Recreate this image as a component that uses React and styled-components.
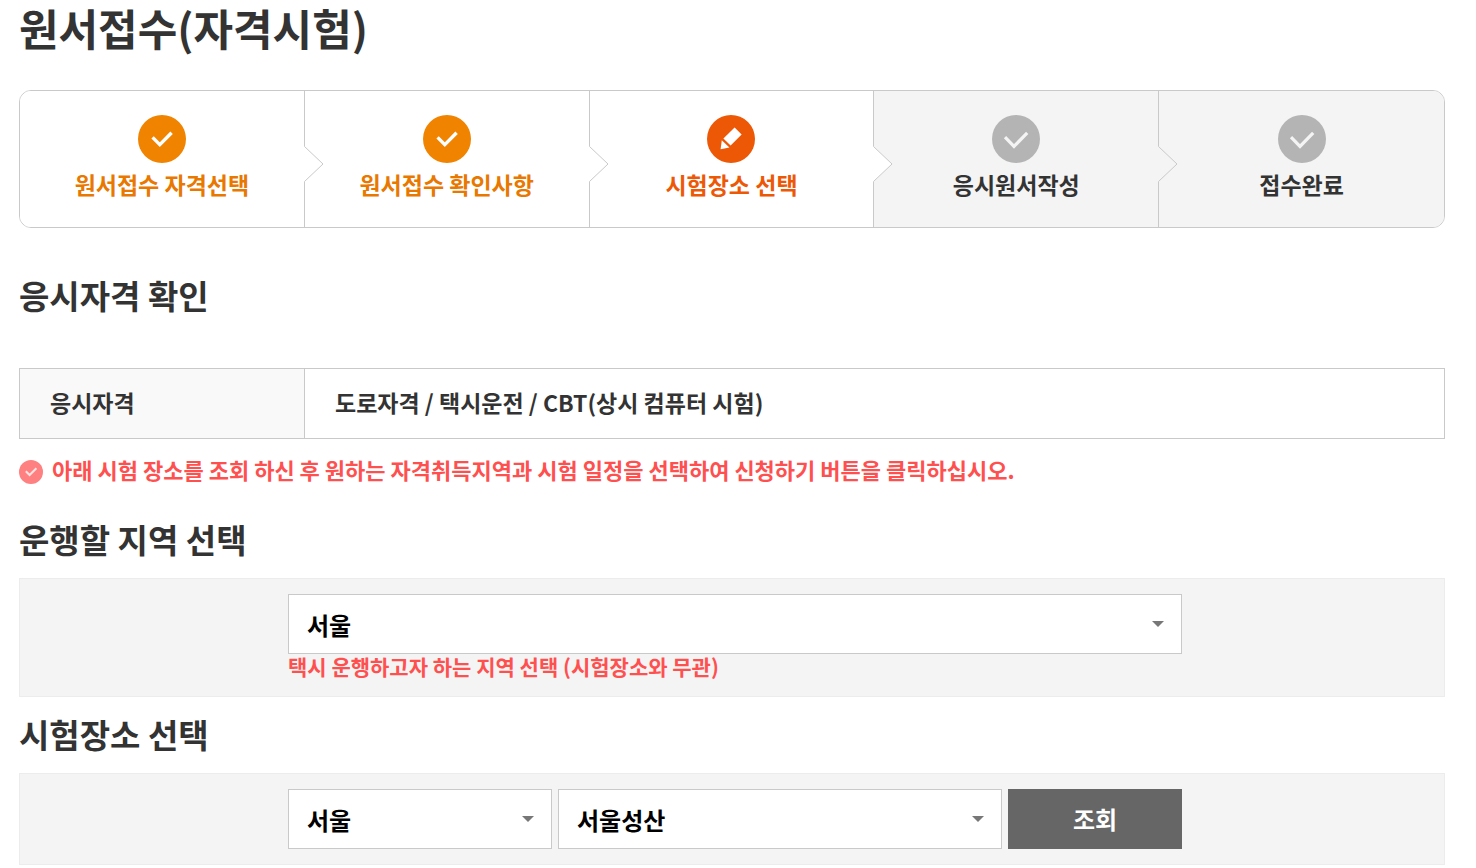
import React, { useState } from 'react';
import styled, { createGlobalStyle } from 'styled-components';

const steps = [
  { label: '원서접수 자격선택', state: 'done' },
  { label: '원서접수 확인사항', state: 'done' },
  { label: '시험장소 선택', state: 'current' },
  { label: '응시원서작성', state: 'todo' },
  { label: '접수완료', state: 'todo' },
];

const stepColors = {
  done: { circle: '#f08300', text: '#e87800', back: '#fff', icon: '#fff' },
  current: { circle: '#ed5807', text: '#ed5807', back: '#fff', icon: '#fff' },
  todo: { circle: '#b4b4b4', text: '#333', back: '#f4f4f4', icon: '#f4f4f4' },
};

const StepIcon = ({ state }) => {
  const { circle, icon } = stepColors[state];
  return (
    <svg width="48" height="48" viewBox="0 0 48 48" aria-hidden="true">
      <circle cx="24" cy="24" r="24" fill={circle} />
      {state === 'done' && (
        <path d="M14.6 22.4L21.8 29.6L33.6 17.8" fill="none" stroke={icon} strokeWidth="3.4" />
      )}
      {state === 'todo' && (
        <path d="M13 22.2L22 31.4L35.2 17.8" fill="none" stroke={icon} strokeWidth="3.2" />
      )}
      {state === 'current' && (
        <g fill={icon}>
          <path d="M27.6 12.6L34.6 19.4L23.6 30.6L16.4 23.6Z" />
          <path d="M14.8 25.2L22.4 32.6L13.6 34.2Z" />
        </g>
      )}
    </svg>
  );
};

const Select = ({ label, value, options, onChange }) => (
  <SelectWrap>
    <SelectBox aria-label={label} value={value} onChange={(e) => onChange(e.target.value)}>
      {options.map((option) => (
        <option key={option}>{option}</option>
      ))}
    </SelectBox>
    <SelectArrow width="12" height="6" viewBox="0 0 12 6" aria-hidden="true">
      <path d="M0 0H12L6 6Z" fill="#777" />
    </SelectArrow>
  </SelectWrap>
);

const App = () => {
  const [region, setRegion] = useState('서울');
  const [city, setCity] = useState('서울');
  const [place, setPlace] = useState('서울성산');

  return (
    <Page>
      <GlobalStyle />
      <Title>원서접수(자격시험)</Title>

      <StepList>
        {steps.map(({ label, state }, i) => (
          <Step key={label} $state={state} aria-current={state === 'current' ? 'step' : undefined}>
            <StepIcon state={state} />
            <StepLabel>{label}</StepLabel>
            {i < steps.length - 1 && (
              <StepNotch width="20" height="36" viewBox="0 0 20 36" aria-hidden="true">
                <path d="M0 0.5H1L19 18L1 35.5H0Z" fill={stepColors[state].back} />
                <path d="M0.5 0.5L19 18L0.5 35.5" fill="none" stroke="#c9c9c9" />
              </StepNotch>
            )}
          </Step>
        ))}
      </StepList>

      <Heading>응시자격 확인</Heading>
      <InfoTable>
        <tbody>
          <tr>
            <th scope="row">응시자격</th>
            <td>도로자격 / 택시운전 / CBT(상시 컴퓨터 시험)</td>
          </tr>
        </tbody>
      </InfoTable>
      <Notice>
        <svg width="24" height="24" viewBox="0 0 24 24" aria-hidden="true">
          <circle cx="12" cy="12" r="12" fill="#ff8080" />
          <path d="M6.8 11.2L10.6 15L17.4 8.2" fill="none" stroke="#ffe3e3" strokeWidth="2" />
        </svg>
        아래 시험 장소를 조회 하신 후 원하는 자격취득지역과 시험 일정을 선택하여 신청하기 버튼을
        클릭하십시오.
      </Notice>

      <Heading $compact>운행할 지역 선택</Heading>
      <Panel>
        <PanelBody>
          <Select
            label="운행할 지역"
            value={region}
            options={['서울', '부산', '대구', '인천']}
            onChange={setRegion}
          />
          <Hint>택시 운행하고자 하는 지역 선택 (시험장소와 무관)</Hint>
        </PanelBody>
      </Panel>

      <Heading $compact>시험장소 선택</Heading>
      <Panel>
        <PanelBody>
          <SearchRow>
            <Select
              label="시험 지역"
              value={city}
              options={['서울', '부산', '대구', '인천']}
              onChange={setCity}
            />
            <Select
              label="시험 장소"
              value={place}
              options={['서울성산', '서울노원']}
              onChange={setPlace}
            />
            <SearchButton type="button">조회</SearchButton>
          </SearchRow>
        </PanelBody>
      </Panel>
    </Page>
  );
};

export default App;

const GlobalStyle = createGlobalStyle`
  * {
    box-sizing: border-box;
  }
  body {
    margin: 0;
    background-color: #fff;
    color: #333;
    font-family: 'Noto Sans CJK KR', sans-serif;
    font-weight: 700;
  }
  button, select {
    font: inherit;
  }
`;

const Page = styled.main`
  padding: 0 31px 0 19px;
`;

const Title = styled.h1`
  margin: 0 0 36px;
  font-size: 43px;
  line-height: 54px;
`;

const StepList = styled.ol`
  display: grid;
  grid-template-columns: repeat(5, 1fr);
  margin: 0 0 43px;
  padding: 0;
  list-style: none;
  border: 1px solid #c9c9c9;
  border-radius: 12px;
  overflow: hidden;
`;

const Step = styled.li`
  position: relative;
  display: flex;
  flex-direction: column;
  align-items: center;
  gap: 1px;
  padding: 24px 0 23px;
  background-color: ${({ $state }) => stepColors[$state].back};
  color: ${({ $state }) => stepColors[$state].text};
  &:not(:last-child) {
    border-right: 1px solid #c9c9c9;
  }
`;

const StepLabel = styled.span`
  font-size: 23px;
  line-height: 40px;
`;

const StepNotch = styled.svg`
  position: absolute;
  top: 55px;
  right: -20px;
  z-index: 1;
`;

const Heading = styled.h2`
  margin: ${({ $compact }) => ($compact ? '13px 0 15px' : '0 0 49px')};
  font-size: 33px;
  line-height: 48px;
`;

const InfoTable = styled.table`
  width: 100%;
  border-collapse: collapse;
  table-layout: fixed;
  font-size: 23px;
  line-height: 34px;
  th,
  td {
    padding: 16px 30px 19px;
    border: 1px solid #c9c9c9;
    text-align: left;
  }
  th {
    width: 20%;
    background-color: #f9f9f9;
  }
`;

const Notice = styled.p`
  display: flex;
  align-items: flex-end;
  gap: 9px;
  margin: 15px 0 31px;
  font-size: 22px;
  line-height: 30px;
  color: #ff5050;
`;

const Panel = styled.section`
  display: grid;
  grid-template-columns: 268fr 894fr 262fr;
  padding: 15px 0;
  border: 1px solid #ececec;
  background-color: #f4f4f4;
`;

const PanelBody = styled.div`
  grid-column: 2;
`;

const SearchRow = styled.div`
  display: grid;
  grid-template-columns: 264fr 444fr 174fr;
  gap: 6px;
`;

const SelectWrap = styled.div`
  position: relative;
`;

const SelectBox = styled.select`
  display: block;
  width: 100%;
  height: 60px;
  padding: 0 40px 0 18px;
  border: 1px solid #c9c9c9;
  border-radius: 0;
  background-color: #fff;
  color: #000;
  font-size: 24px;
  appearance: none;
`;

const SelectArrow = styled.svg`
  position: absolute;
  top: 27px;
  right: 18px;
  pointer-events: none;
`;

const Hint = styled.p`
  margin: 0 0 2px;
  font-size: 21px;
  line-height: 25px;
  color: #ff5050;
`;

const SearchButton = styled.button`
  height: 60px;
  padding: 0 0 2px;
  border: 0;
  background-color: #666;
  color: #fff;
  font-size: 24px;
  cursor: pointer;
`;
